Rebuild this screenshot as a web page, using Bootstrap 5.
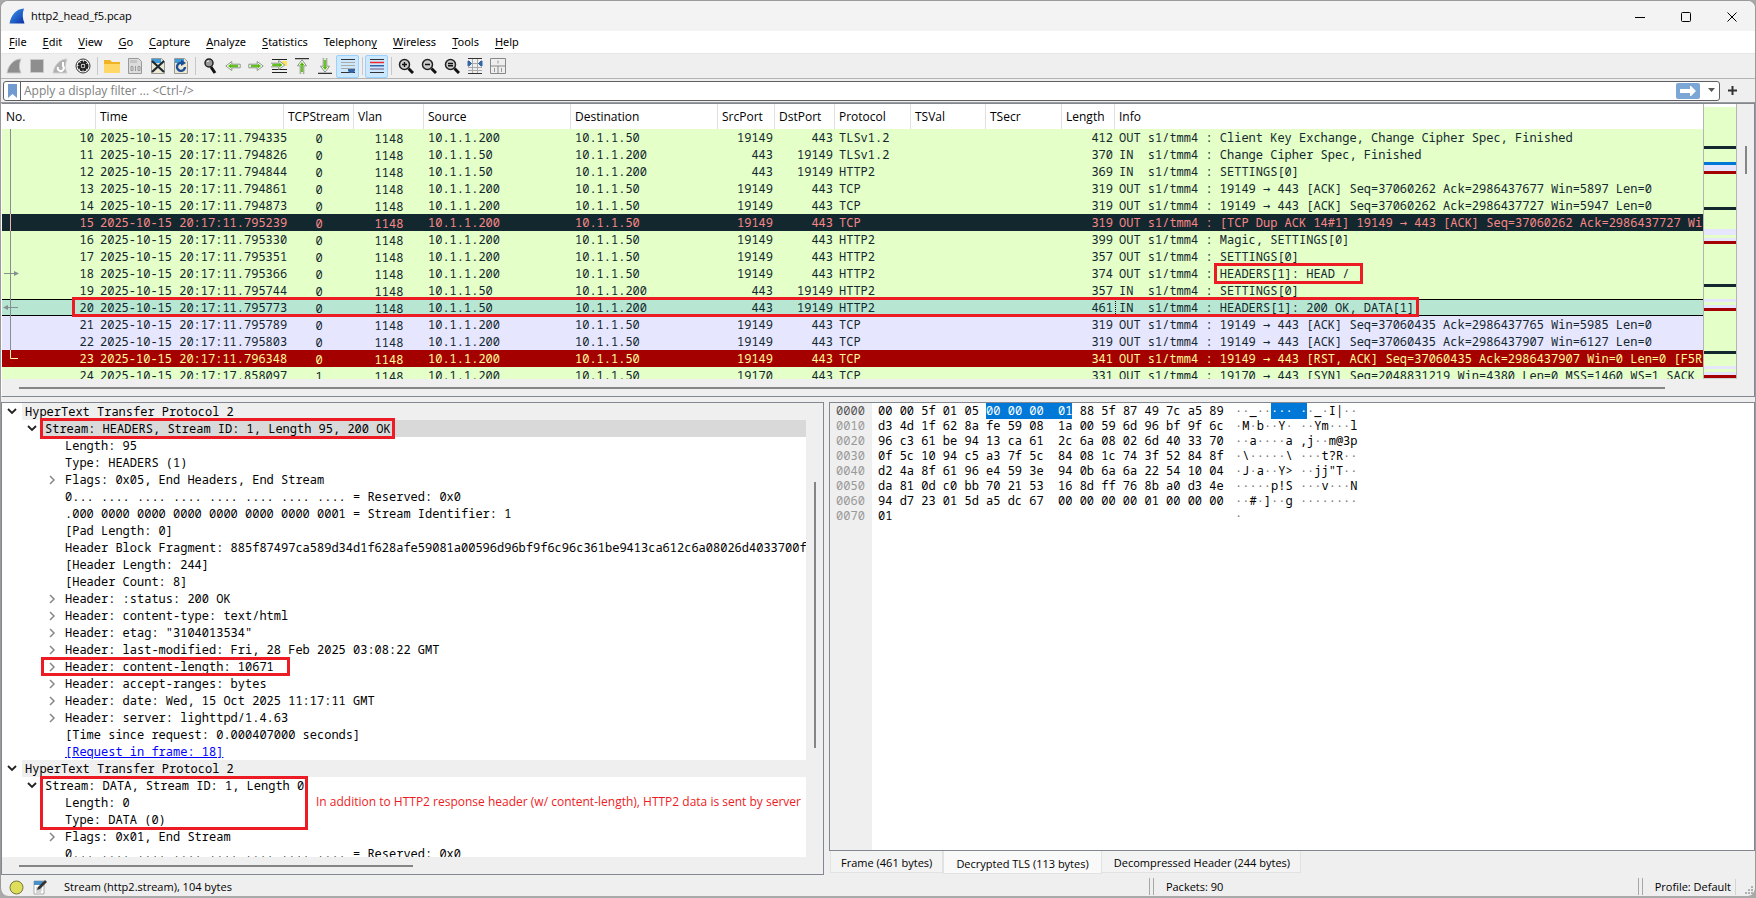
<!DOCTYPE html>
<html lang="en">
<head>
<meta charset="utf-8">
<meta name="viewport" content="width=device-width, initial-scale=1">
<title>http2_head_f5.pcap</title>
<link href="https://cdn.jsdelivr.net/npm/bootstrap@5.3.0/dist/css/bootstrap.min.css" rel="stylesheet">
<style>
  :root { --chrome:#efefef; --frame:#828790; --ink:#12272e; --red:#ed1c24; --green:#e4ffc7; --lav:#e7e6ff; }
  body { height:100vh; background:#a9a9a9; font:11px/16px "Open Sans","Noto Sans",sans-serif; color:#000; overflow:hidden; }
  button { border:0; background:none; padding:0; }
  .mono { font:12px/17px "Noto Sans Mono","DejaVu Sans Mono",monospace; white-space:pre; }
  .arr { font-family:"DejaVu Sans Mono",monospace; line-height:1; }
  .win { margin-bottom:2px; border:1px solid #9a9a9a; border-bottom:0; border-radius:8px; background:var(--chrome); overflow:hidden; }
  .titlebar { height:30px; background:#f3f3f3; padding-left:8px; gap:6px; }
  .winbtn { width:46px; height:30px; }
  .menubar { height:23px; background:#fff; padding:0 8px; gap:16px; border-bottom:1px solid #e6e6e6; font-family:"Noto Sans","Open Sans",sans-serif; }
  .menubar a { color:#000; text-decoration:none; }
  .menubar u { text-underline-offset:2px; }
  .toolbar { height:25px; border-bottom:1px solid #b4b4b4; padding-left:1px; }
  .tool { width:23px; height:23px; border:1px solid transparent; border-radius:2px; }
  .tool.on { background:#cce8ff; border-color:#99d1ff; }
  .tool svg { width:16px; height:16px; }
  .tsep { width:6px; display:flex; justify-content:center; }
  .tsep::after { content:""; width:1px; height:18px; background:#c8c8c8; }
  .filterbar { height:24px; padding:2px 18px 2px 2px; border-bottom:1px solid #9a9a9a; }
  .filterbox { border:1px solid #5f5f63; border-radius:3px; background:#fff; height:20px; }
  .filterbox .mark-btn { width:17px; border-right:1px solid #5f5f63; height:18px; }
  .filterbox input { border:0; outline:0; background:none; font-size:12px; padding:0 3px; min-width:0; height:18px; }
  .filterbox input::placeholder { color:#808080; opacity:1; }
  .apply { width:24px; height:16px; background:#7ba6d5; border-radius:2px; margin-right:8px; }

  .panes { gap:5px; min-height:0; }
  .pane { border:1px solid var(--frame); min-width:0; min-height:0; background:var(--chrome); }
  .packets { flex:292 1 0; border-left-color:#fff; }
  .lower { flex:473 1 0; gap:5px; min-height:0; }
  .details { flex:822 1 0; }
  .bytes { flex:927 1 0; min-width:0; }

  .ptable { table-layout:fixed; width:100%; border-collapse:separate; border-spacing:0; color:var(--ink); }
  .ptable th { font:12px/24px "Open Sans","Noto Sans",sans-serif; height:25px; padding:0 0 0 4px; background:#fff; color:#000; border-right:1px solid #e0e0e0; overflow:hidden; white-space:nowrap; }
  .ptable th:last-child { border-right:0; }
  .ptable td { height:17px; padding:0 2px 0 4px; overflow:visible; }
  .ptable td.mid { text-align:center; padding-left:2px; padding-top:2px; line-height:15px; }
  .ptable tr { position:relative; }
  .g td { background:var(--green); } .l td { background:var(--lav); }
  .k td { background:var(--ink); color:#f78787; } .r td { background:#a40000; color:#fffc9c; }
  .s td { background:#b7e7d3; border-top:1px solid #000; border-bottom:1px solid #000; line-height:15px; }
  .ptable .s td:last-child { border-left:1px dotted #000; padding-left:3px; }
  .s td.mid { line-height:13px; }
  .tie { position:absolute; left:0; top:0; width:20px; height:17px; }
  .callout { position:absolute; border:3px solid var(--red); pointer-events:none; z-index:2; }
  .rowbox { left:70px; top:-2px; width:1347px; height:20px; }
  .wrapbox { position:relative; }
  .wrapbox > .callout { inset:-2px -6px -2px -6px; }
  .tight > .callout { inset:-2px -4px -2px -5px; }
  .withtoggle > .callout { inset:-1px -16px -1px -24px; }

  .map { width:34px; border:1px solid #b4b4b4; border-top:0; border-bottom-color:#d0d0d0; background:#fff; padding-top:3px; }
  .vbar { width:17px; padding:42px 7px 0 8px; }
  .vbar i, .hbar i { display:block; background:#858585; }
  .hbar { height:17px; padding:8px 0 0 17px; }
  .hbar i { height:2px; }

  .tree { background:#fff; color:#000; min-height:0; }
  .node { height:17px; display:flex; }
  .node button { width:20px; height:17px; flex:none; display:flex; align-items:center; justify-content:center; }
  .node .txt { flex:1; padding-left:3px; min-width:0; }
  .proto .txt { background:#efefef; } .sel .txt { background:#d9d9d9; }
  .node a { color:#00f; }
  .note { position:absolute; z-index:3; left:314px; font:12px/15px "Open Sans","Noto Sans",sans-serif; color:var(--red); white-space:nowrap; }

  .hexview { background:#fff; min-height:0; line-height:15px; }
  .hexview .offs { background:#efefef; width:42px; padding-left:6px; color:#999; flex:none; }
  .hexview .offs b { font-weight:400; color:#555; }
  .hexview .hexcol { width:363px; padding-left:6px; flex:none; }
  .hexview em { font-style:normal; background:#0078d7; color:#fff; }
  .hexview .dots i { font-style:normal; color:#777; }
  .hexview em i { color:#fff !important; }
  .dtabs { height:24px; padding-left:1px; }
  .dtab { height:22px; padding:2px 10px 0; background:#f3f3f3; border:1px solid #e2e2e2; border-top:0; }
  .dtab.on { height:23px; background:#f9f9f9; padding:3px 12px 0; }
  .dtab.plain { border-left:0; padding-left:12px; }

  .status { height:21px; padding-top:3px; }
  .grip { width:5px; height:17px; border:solid #a8a8a8; border-width:0 1px; margin-top:-2px; }
  .profile { border-right:1px solid #d4d4d4; }
</style>
</head>
<body class="d-flex flex-column">
<div class="win flex-fill d-flex flex-column">

  <header class="titlebar d-flex align-items-center flex-shrink-0">
    <svg width="16" height="16" viewBox="0 0 16 16"><defs><linearGradient id="fin" x1="0" x2="1" y1="0" y2="1"><stop offset="0" stop-color="#3f9cf5"/><stop offset="1" stop-color="#0a2fa0"/></linearGradient></defs><path d="M.5 15.500C2 7 7 1 15 .5c-2 5-1.500 10 .5 15z" fill="url(#fin)"/></svg>
    <span class="flex-fill">http2_head_f5.pcap</span>
    <div class="d-flex">
    <button class="winbtn" aria-label="Minimize"><svg width="10" height="10"><path d="M0 5.500h10" stroke="#000"/></svg></button>
    <button class="winbtn" aria-label="Maximize"><svg width="10" height="10"><rect x=".5" y=".5" width="9" height="9" rx="1" fill="none" stroke="#000"/></svg></button>
    <button class="winbtn" aria-label="Close"><svg width="10" height="10"><path d="M.5.5l9 9M9.500.5l-9 9" stroke="#000"/></svg></button>
    </div>
  </header>

  <nav class="menubar d-flex align-items-center flex-shrink-0">
    <a href="#"><u>F</u>ile</a><a href="#"><u>E</u>dit</a><a href="#"><u>V</u>iew</a><a href="#"><u>G</u>o</a><a href="#"><u>C</u>apture</a><a href="#"><u>A</u>nalyze</a><a href="#"><u>S</u>tatistics</a><a href="#">Telephon<u>y</u></a><a href="#"><u>W</u>ireless</a><a href="#"><u>T</u>ools</a><a href="#"><u>H</u>elp</a>
  </nav>

  <div class="toolbar d-flex align-items-center flex-shrink-0" id="toolbar"></div>

  <form class="filterbar d-flex align-items-center flex-shrink-0" onsubmit="return false">
    <div class="filterbox flex-fill d-flex align-items-center">
      <button type="button" class="mark-btn d-flex align-items-center justify-content-center" aria-label="Bookmarks"><svg width="9" height="14"><path d="M0 0h9v14l-4.500-4L0 14z" fill="#6f9bd1"/></svg></button>
      <input class="flex-fill" type="text" aria-label="Display filter" placeholder="Apply a display filter ... &lt;Ctrl-/&gt;">
      <button type="button" class="apply d-flex align-items-center justify-content-center" aria-label="Apply"><svg width="16" height="10"><path d="M0 3h10V0h1l5 5-5 5h-1V7H0z" fill="#fff"/></svg></button>
      <button type="button" class="me-1 d-flex" aria-label="History"><svg width="7" height="5"><path d="M0 0h7L3.500 4z" fill="#555"/></svg></button>
    </div>
    <button type="button" class="ms-1 d-flex ps-1" aria-label="Add"><svg width="9" height="9"><path d="M4.500 0v9M0 4.500h9" stroke="#333" stroke-width="2"/></svg></button>
  </form>

  <main class="panes flex-fill d-flex flex-column">
    <section class="pane packets d-flex flex-column">
      <div class="d-flex flex-fill" style="min-height:0">
        <div class="flex-fill overflow-hidden bg-white" style="min-width:0">
          <table class="ptable mono">
            <colgroup><col style="width:94px"><col style="width:188px"><col style="width:70px"><col style="width:70px"><col style="width:147px"><col style="width:147px"><col style="width:57px"><col style="width:60px"><col style="width:76px"><col style="width:75px"><col style="width:76px"><col style="width:53px"><col></colgroup>
            <thead><tr><th>No.</th><th>Time</th><th>TCPStream</th><th>Vlan</th><th>Source</th><th>Destination</th><th>SrcPort</th><th>DstPort</th><th>Protocol</th><th>TSVal</th><th>TSecr</th><th>Length</th><th>Info</th></tr></thead>
            <tbody id="rows"></tbody>
          </table>
        </div>
        <div class="map flex-shrink-0" id="map"></div>
        <div class="vbar flex-shrink-0"><i style="height:28px"></i></div>
      </div>
      <div class="hbar flex-shrink-0" style="padding-right:89px"><i></i></div>
    </section>

    <div class="lower d-flex">
      <section class="pane details d-flex flex-column">
        <div class="d-flex flex-fill" style="min-height:0">
          <div class="tree mono flex-fill overflow-hidden position-relative" style="min-width:0" id="tree"></div>
          <div class="vbar flex-shrink-0" style="padding-top:79px"><i style="height:266px"></i></div>
        </div>
        <div class="hbar flex-shrink-0"><i style="width:49%"></i></div>
      </section>

      <section class="bytes d-flex flex-column">
        <div class="pane hexview mono flex-fill d-flex overflow-hidden">
          <div class="offs" id="offs"></div>
          <div class="hexcol" id="hex"></div>
          <div class="dots" id="asc"></div>
        </div>
        <div class="dtabs d-flex align-items-start flex-shrink-0">
          <button class="dtab">Frame (461 bytes)</button><button class="dtab on">Decrypted TLS (113 bytes)</button><button class="dtab plain">Decompressed Header (244 bytes)</button>
        </div>
      </section>
    </div>
  </main>

  <footer class="status d-flex align-items-center flex-shrink-0">
    <button class="d-flex ms-2" aria-label="Expert info"><svg width="15" height="15"><circle cx="7.500" cy="7.500" r="6.500" fill="#dede5a" stroke="#77773a"/></svg></button>
    <button class="d-flex ms-2" aria-label="Capture comment"><svg width="16" height="16"><path d="M2 2h10v13H2z" fill="#fff" stroke="#aaa"/><path d="M2 2h9v4H2z" fill="#4a90c8"/><path d="M4 9h6M4 11h6M4 13h5" stroke="#aaa"/><path d="M5 11l1-3 7-7 2 2-7 7z" fill="#333"/></svg></button>
    <span class="ms-3" style="flex:1090 1 0">Stream (http2.stream), 104 bytes</span>
    <span class="grip"></span><span class="ms-2 ps-1" style="flex:474 1 0">Packets: 90</span>
    <span class="grip"></span><span class="ms-2 ps-1 pe-1 profile">Profile: Default</span>
    <svg class="ms-2" width="11" height="17"><path d="M7 7h2v2h-2zM7 10h2v2h-2zM7 13h2v2h-2zM4 10h2v2h-2zM4 13h2v2h-2zM1 13h2v2h-2z" fill="#b0b0b0"/></svg>
  </footer>
</div>

<script>
// ---- toolbar icons ----
const page = '<path d="M1.500.5h10l3 3v12h-13z" fill="F" stroke="#999"/>';
const glass = s => '<circle cx="6.500" cy="6.500" r="5" fill="#ccc" stroke="#222" stroke-width="1.500"/><path d="M10.500 10.500l4.500 4.500" stroke="#111" stroke-width="3"/><path d="' + s + '" stroke="#111" stroke-width="1.400" fill="none"/>';
const arrow = '<path d="M.8 8l6-4.500v2.700h8.400v3.600H6.800v2.700z" fill="#fff" stroke="#8a9686"/><path d="M3.500 8L6 6v1.300h7v1.400H6V10z" fill="#4fb800" stroke="#4fb800" stroke-width=".6"/>';
const icons = [
  ['Start', '<path d="M1 15C2 8 7 1 15 1c-2 5-2 10 0 14z" fill="#8e8e8e" stroke="#c9c9c9"/>'],
  ['Stop', '<path d="M1.500 1.500h13v13h-13z" fill="#8e8e8e" stroke="#c9c9c9"/>'],
  ['Restart', '<path d="M1 15C2 8 7 1 15 1c-2 5-2 10 0 14z" fill="#b0b0b0" stroke="#d0d0d0"/><path d="M6 9a3 3 0 1 0 5-1V4" fill="none" stroke="#fff" stroke-width="2"/>'],
  ['Options', '<circle cx="8" cy="8" r="7" fill="#fff" stroke="#333"/><circle cx="8" cy="8" r="4" fill="none" stroke="#222" stroke-width="3" stroke-dasharray="2.600 .6"/><circle cx="8" cy="8" r="3" fill="#fff" stroke="#222" stroke-width="1.500"/><circle cx="8" cy="8" r="1.500" fill="#222"/>'],
  0,
  ['Open', '<path d="M0 2h6l2 2h8v11H0z" fill="#f0b323"/><path d="M0 6h16v9H0z" fill="#ffd767"/>'],
  ['Save', page.replace('F', '#dcdcdc') + '<path d="M3 2h7v3H3z" fill="#c4c4c4"/><path d="M4 8.500h2v4H4zM8.500 8v5M11 8.500h2v4h-2z" fill="none" stroke="#999"/>'],
  ['Close', page.replace('F', '#eee8cf') + '<path d="M2 1h9v4H2z" fill="#3f9ad6"/><path d="M2 3l12 11M14 3L2 14" stroke="#1c2a33" stroke-width="2.200"/>'],
  ['Reload', page.replace('F', '#eee8cf') + '<path d="M2 1h9v4H2z" fill="#3f9ad6"/><path d="M12 9a4 4 0 1 1-3-4" fill="none" stroke="#1d4f96" stroke-width="2.400"/><path d="M8 1.500l5 3.500-5 3z" fill="#1d4f96"/>'],
  0,
  ['Find', '<circle cx="7" cy="5" r="4" fill="#999" stroke="#222" stroke-width="1.500"/><path d="M9 9l4 6" stroke="#111" stroke-width="3"/><path d="M5 4a2 2 0 0 1 2-1" stroke="#fff" fill="none"/>'],
  ['Back', arrow],
  ['Forward', '<g transform="matrix(-1 0 0 1 16 0)">' + arrow + '</g>'],
  ['Go to', '<path d="M1 1.500h15M9 4.500h7M1 11.500h15M1 14.500h15" stroke="#222"/><path d="M11 3h5v5h-5z" fill="#ffe35a"/><g transform="matrix(-1 0 0 1 14.500 -1)">' + arrow + '</g>'],
  ['First', '<path d="M1 .7h14" stroke="#333" stroke-width="1.300"/><g transform="matrix(0 1 -1 0 16 1)">' + arrow + '</g>'],
  ['Last', '<path d="M1 15.300h14" stroke="#333" stroke-width="1.300"/><g transform="matrix(0 -1 1 0 0 15)">' + arrow + '</g>'],
  ['Auto scroll', '<path d="M1 1.500h14M1 14.500h14" stroke="#333"/><path d="M1 4.500h14M1 7.500h14M1 10.500h14" stroke="#aaa"/><path d="M8 11h7v2l-2 2h-3l-2-2z" fill="#3465a4"/>', 1],
  0,
  ['Colorize', '<path d="M1 1.500h14M1 14.500h14" stroke="#333"/><path d="M1 4.500h14" stroke="#ef2929" stroke-width="1.500"/><path d="M1 7.700h14" stroke="#3465a4" stroke-width="1.500"/><path d="M1 11h14" stroke="#75507b"/>', 1],
  0,
  ['Zoom in', glass('M4 6.500h5M6.500 4v5')],
  ['Zoom out', glass('M4 6.500h5')],
  ['Normal size', glass('M4 5.500h5M4 7.800h5')],
  ['Resize columns', '<path d="M1 .5h14M1 15.500h14" stroke="#333"/><path d="M1 5.500h14M1 9.500h14M1 12.500h14M5.500 1v14M10.500 1v14" stroke="#aaa"/><path d="M1 3h1l2.500 2.500L2 8H1zM15 3h-1l-2.500 2.500L14 8h1z" fill="#3465a4" stroke="#3465a4"/>'],
  ['Layout', '<path d="M.5.5h15v15H.5zM.5 8h15M8 8v7.500" fill="#eee" stroke="#888"/><path d="M8 2.500v3M4.500 10v4M11.500 10v4" stroke="#999"/>']
];
document.getElementById('toolbar').innerHTML = icons.map(i => i
  ? `<button class="tool d-flex align-items-center justify-content-center${i[2] ? ' on' : ''}" aria-label="${i[0]}"><svg viewBox="0 0 16 16">${i[1]}</svg></button>`
  : '<span class="tsep"></span>').join('');

// ---- packet list ----
const A = '10.1.1.200', B = '10.1.1.50';
const pk = [
  ['g','11.794335',1,'TLSv1.2',412,'Client Key Exchange, Change Cipher Spec, Finished'],
  ['g','11.794826',0,'TLSv1.2',370,'Change Cipher Spec, Finished'],
  ['g','11.794844',0,'HTTP2',369,'SETTINGS[0]'],
  ['g','11.794861',1,'TCP',319,'19149 → 443 [ACK] Seq=37060262 Ack=2986437677 Win=5897 Len=0'],
  ['g','11.794873',1,'TCP',319,'19149 → 443 [ACK] Seq=37060262 Ack=2986437727 Win=5947 Len=0'],
  ['k','11.795239',1,'TCP',319,'[TCP Dup ACK 14#1] 19149 → 443 [ACK] Seq=37060262 Ack=2986437727 Win=5947 Len=0'],
  ['g','11.795330',1,'HTTP2',399,'Magic, SETTINGS[0]'],
  ['g','11.795351',1,'HTTP2',357,'SETTINGS[0]'],
  ['g','11.795366',1,'HTTP2',374,'<span class="wrapbox">HEADERS[1]: HEAD / <span class="callout"></span></span>'],
  ['g','11.795744',0,'HTTP2',357,'SETTINGS[0]'],
  ['s','11.795773',0,'HTTP2',461,'HEADERS[1]: 200 OK, DATA[1]'],
  ['l','11.795789',1,'TCP',319,'19149 → 443 [ACK] Seq=37060435 Ack=2986437765 Win=5985 Len=0'],
  ['l','11.795803',1,'TCP',319,'19149 → 443 [ACK] Seq=37060435 Ack=2986437907 Win=6127 Len=0'],
  ['r','11.796348',1,'TCP',341,'19149 → 443 [RST, ACK] Seq=37060435 Ack=2986437907 Win=0 Len=0 [F5RST: Peer]'],
  ['g','17.858097',1,'TCP',331,'19170 → 443 [SYN] Seq=2048831219 Win=4380 Len=0 MSS=1460 WS=1 SACK_PERM']
];
document.getElementById('rows').innerHTML = pk.map((p, i) => {
  const n = i + 10, out = p[2], port = n === 24 ? 19170 : 19149;
  const c = { k:'#f7b0b0', r:'#fffc9c' }[p[0]] || '#84908f';
  const d = n === 24 ? '' : n === 23 ? 'M8.500 0v8.500H16' : 'M8.500 0v17' + (n === 18 ? 'M2 8.500h10' : n === 20 ? 'M6 8.500h10' : '');
  const head = n === 18 ? '<path d="M12 6l5 2.500-5 2.500z"/>' : n === 20 ? '<path d="M6 6L1 8.500 6 11z"/>' : '';
  return `<tr class="${p[0]}"><td class="text-end"><svg class="tie" fill="${c}"><path d="${d}" stroke="${c}" fill="none"/>${head}</svg>${n}${n === 20 ? '<span class="callout rowbox"></span>' : ''}</td>` +
    `<td>2025-10-15 20:17:${p[1]}</td><td class="mid">${n === 24 ? 1 : 0}</td><td class="mid">1148</td>` +
    `<td>${out ? A : B}</td><td>${out ? B : A}</td><td class="text-end">${out ? port : 443}</td><td class="text-end">${out ? 443 : port}</td>` +
    `<td>${p[3]}</td><td></td><td></td><td class="text-end">${p[4]}</td><td>${out ? 'OUT' : 'IN '} s1/tmm4 : ${p[5].replace('→', '<span class="arr">→</span>')}</td></tr>`;
}).join('');

// ---- packet minimap: [colour, height] bands ----
const C = { g:'#e4ffc7', k:'#12272e', b:'#0078d7', l:'#e7e6ff', r:'#a40000' };
document.getElementById('map').innerHTML = 'g39 k3 g13 b3 l6 r3 g33 k3 g19 l6 g3 l3 r3 g40 k3 g12 l3 g3 l3 r3 g40 k3 g12 l3 g3 l3 r3'
  .split(' ').map(s => `<div style="height:${s.slice(1)}px;background:${C[s[0]]}"></div>`).join('');

// ---- protocol tree: [depth, toggle, text, class] ----
const box = (t, c) => `<span class="wrapbox ${c}">${t}<span class="callout"></span></span>`;
const tree = [
  [0,'v','HyperText Transfer Protocol 2','proto'],
  [1,'v',box('Stream: HEADERS, Stream ID: 1, Length 95, 200 OK','tight'),'sel'],
  [2,'','Length: 95'], [2,'','Type: HEADERS (1)'], [2,'>','Flags: 0x05, End Headers, End Stream'],
  [2,'','0... .... .... .... .... .... .... .... = Reserved: 0x0'],
  [2,'','.000 0000 0000 0000 0000 0000 0000 0001 = Stream Identifier: 1'],
  [2,'','[Pad Length: 0]'],
  [2,'','Header Block Fragment: 885f87497ca589d34d1f628afe59081a00596d96bf9f6c96c361be9413ca612c6a08026d4033700f5c1094c5'],
  [2,'','[Header Length: 244]'], [2,'','[Header Count: 8]'],
  [2,'>','Header: :status: 200 OK'], [2,'>','Header: content-type: text/html'], [2,'>','Header: etag: "3104013534"'],
  [2,'>','Header: last-modified: Fri, 28 Feb 2025 03:08:22 GMT'],
  [2,'>',box('Header: content-length: 10671','withtoggle')],
  [2,'>','Header: accept-ranges: bytes'], [2,'>','Header: date: Wed, 15 Oct 2025 11:17:11 GMT'], [2,'>','Header: server: lighttpd/1.4.63'],
  [2,'','[Time since request: 0.000407000 seconds]'], [2,'','<a href="#">[Request in frame: 18]</a>'],
  [0,'v','HyperText Transfer Protocol 2','proto'],
  [1,'v','<span class="wrapbox">Stream: DATA, Stream ID: 1, Length 0<span class="callout" style="inset:-1px -4px -36px -5px"></span></span>'],
  [2,'','<span class="note">In addition to HTTP2 response header (w/ content-length), HTTP2 data is sent by server</span>Length: 0'],
  [2,'','Type: DATA (0)'], [2,'>','Flags: 0x01, End Stream'],
  [2,'','0... .... .... .... .... .... .... .... = Reserved: 0x0']
];
const chev = { v:'<svg width="10" height="7"><path d="M1 1l4 4 4-4" fill="none" stroke="#222" stroke-width="1.800"/></svg>',
               '>':'<svg width="7" height="10"><path d="M1 1l4 4-4 4" fill="none" stroke="#888" stroke-width="1.500"/></svg>' };
document.getElementById('tree').innerHTML = tree.map(([d, t, s, c]) =>
  `<div class="node ${c || ''}" style="padding-left:${d * 20}px">${t ? `<button aria-label="Toggle">${chev[t]}</button>` : '<span style="width:20px"></span>'}<div class="txt">${s}</div></div>`).join('');

// ---- hex dump ----
const hex = [
  '00 00 5f 01 05 <em>00 00 00  01</em> 88 5f 87 49 7c a5 89', 'd3 4d 1f 62 8a fe 59 08  1a 00 59 6d 96 bf 9f 6c',
  '96 c3 61 be 94 13 ca 61  2c 6a 08 02 6d 40 33 70', '0f 5c 10 94 c5 a3 7f 5c  84 08 1c 74 3f 52 84 8f',
  'd2 4a 8f 61 96 e4 59 3e  94 0b 6a 6a 22 54 10 04', 'da 81 0d c0 bb 70 21 53  16 8d ff 76 8b a0 d3 4e',
  '94 d7 23 01 5d a5 dc 67  00 00 00 00 01 00 00 00', '01'];
const asc = ['··_··<em>··· ·</em>·_·I|··', '·M·b··Y· ··Ym···l', '··a····a ,j··m@3p', '·\\·····\\ ···t?R··', '·J·a··Y&gt; ··jj"T··', '·····p!S ···v···N', '··#·]··g ········', '·'];
document.getElementById('hex').innerHTML = hex.join('\n');
document.getElementById('asc').innerHTML = asc.join('\n').replace(/·+/g, m => `<i>${m}</i>`);
document.getElementById('offs').innerHTML = hex.map((_, i) => i ? '00' + i + '0' : '<b>0000</b>').join('\n');
</script>
<script src="https://cdn.jsdelivr.net/npm/bootstrap@5.3.0/dist/js/bootstrap.bundle.min.js"></script>
</body>
</html>
